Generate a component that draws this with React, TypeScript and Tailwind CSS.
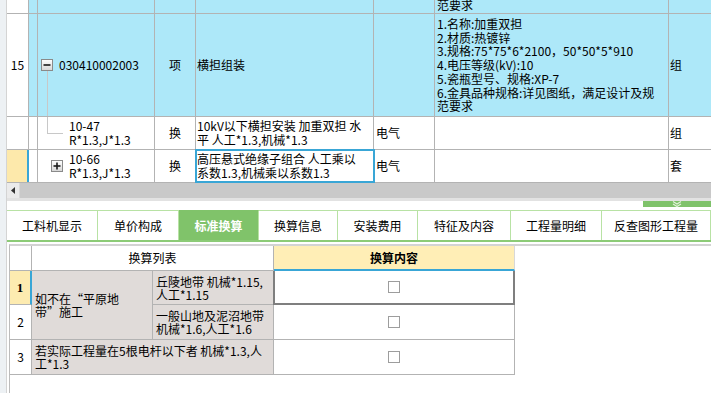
import React from "react"

const ff = "font-['Noto_Sans_CJK_SC','Noto_Sans',sans-serif]"
const line = "border-[#b3b3b3]"
const blue = "bg-[#ade8f9]"

// widths of the upper grid columns (border included)
const W = {
  num: "w-[22px]",
  c1: "w-[9px]",
  code: "w-[117px]",
  type: "w-[41px]",
  name: "w-[178px]",
  major: "w-[61px]",
  feat: "w-[234px]",
}

function TreeBox({ plus }: { plus?: boolean }) {
  return (
    <svg width="12" height="12" viewBox="0 0 12 12" className="shrink-0">
      <defs>
        <linearGradient id={plus ? "gp" : "gm"} x1="0" y1="0" x2="0" y2="1">
          <stop offset="0" stopColor="#ffffff" />
          <stop offset="1" stopColor="#d6d6d6" />
        </linearGradient>
      </defs>
      <rect x="0.5" y="0.5" width="11" height="11" fill={`url(#${plus ? "gp" : "gm"})`} stroke="#8a8a8a" />
      <path d="M2.5 6h7" stroke="#1a1a1a" strokeWidth="1.6" />
      {plus && <path d="M6 2.5v7" stroke="#1a1a1a" strokeWidth="1.6" />}
    </svg>
  )
}

function Check() {
  return <span className="block w-[12px] h-[12px] border border-[#9d9d9d] bg-white" />
}

const tabs = [
  { label: "工料机显示", w: "w-[91px]" },
  { label: "单价构成", w: "w-[81px]" },
  { label: "标准换算", w: "w-[80px]", active: true },
  { label: "换算信息", w: "w-[79px]" },
  { label: "安装费用", w: "w-[80px]" },
  { label: "特征及内容", w: "w-[93px]" },
  { label: "工程量明细", w: "w-[91px]" },
  { label: "反查图形工程量", w: "flex-1" },
]

export default function App() {
  return (
    <div className={`w-[711px] h-[393px] overflow-hidden flex bg-white text-[12px] text-black ${ff}`}>
      <div className="w-[7px] shrink-0 bg-[#edf1f4] border-r border-[#d4d4d4]" />

      <div className="flex-1 flex flex-col min-w-0">
        {/* upper grid */}
        <div className={`flex h-[14px] border-b ${line}`}>
          <div className={`${W.num} shrink-0 border-r ${line} bg-white`} />
          <div className={`${W.c1} shrink-0 border-r ${line} ${blue}`} />
          <div className={`${W.code} shrink-0 border-r ${line} ${blue}`} />
          <div className={`${W.type} shrink-0 border-r ${line} ${blue}`} />
          <div className={`${W.name} shrink-0 border-r ${line} ${blue}`} />
          <div className={`${W.major} shrink-0 border-r ${line} ${blue}`} />
          <div className={`${W.feat} shrink-0 border-r ${line} ${blue} overflow-hidden pl-[2px]`}>
            <div className="leading-[13px] -mt-[2px]">范要求</div>
          </div>
          <div className={`flex-1 ${blue}`} />
        </div>

        <div className={`flex h-[103px] border-b ${line}`}>
          <div className={`${W.num} shrink-0 border-r ${line} bg-white flex items-center justify-center`}>15</div>
          <div className={`${W.c1} shrink-0 border-r ${line} ${blue}`} />
          <div className={`${W.code} shrink-0 border-r ${line} ${blue} relative flex items-center pl-[3px] gap-[6px]`}>
            <TreeBox />
            <span>030410002003</span>
            <span className="absolute left-[9px] top-[57px] bottom-0 w-px bg-[#c8c8c8]" />
          </div>
          <div className={`${W.type} shrink-0 border-r ${line} ${blue} flex items-center justify-center`}>项</div>
          <div className={`${W.name} shrink-0 border-r ${line} ${blue} flex items-center pl-[1px]`}>横担组装</div>
          <div className={`${W.major} shrink-0 border-r ${line} ${blue}`} />
          <div className={`${W.feat} shrink-0 border-r ${line} ${blue} flex items-center pl-[2px] overflow-hidden`}>
            <div className="leading-[13.7px] whitespace-nowrap">
              <div>1.名称:加重双担</div>
              <div>2.材质:热镀锌</div>
              <div>3.规格:75*75*6*2100，50*50*5*910</div>
              <div>4.电压等级(kV):10</div>
              <div>5.瓷瓶型号、规格:XP-7</div>
              <div>6.金具品种规格:详见图纸，满足设计及规</div>
              <div>范要求</div>
            </div>
          </div>
          <div className={`flex-1 ${blue} flex items-center pl-[1px]`}>组</div>
        </div>

        <div className={`flex h-[33px] border-b ${line}`}>
          <div className={`${W.num} shrink-0 border-r ${line} bg-white`} />
          <div className={`${W.c1} shrink-0 border-r ${line}`} />
          <div className={`${W.code} shrink-0 border-r ${line} relative flex items-center pl-[31px]`}>
            <span className="absolute left-[9px] top-0 h-[16px] w-px bg-[#c8c8c8]" />
            <span className="absolute left-[9px] top-[16px] w-[16px] h-px bg-[#c8c8c8]" />
            <div className="leading-[14px] whitespace-nowrap">
              <div>10-47</div>
              <div>R*1.3,J*1.3</div>
            </div>
          </div>
          <div className={`${W.type} shrink-0 border-r ${line} flex items-center justify-center`}>换</div>
          <div className={`${W.name} shrink-0 border-r ${line} flex items-center pl-[1px] overflow-hidden`}>
            <div className="leading-[14px] whitespace-nowrap">
              <div>10kV以下横担安装 加重双担 水</div>
              <div>平  人工*1.3,机械*1.3</div>
            </div>
          </div>
          <div className={`${W.major} shrink-0 border-r ${line} flex items-center pl-[2px]`}>电气</div>
          <div className={`${W.feat} shrink-0 border-r ${line}`} />
          <div className="flex-1 flex items-center pl-[1px]">组</div>
        </div>

        <div className={`flex h-[33px] border-b ${line}`}>
          <div className={`${W.num} shrink-0 border-r-2 border-[#39a6d6] bg-[#fde9ab]`} />
          <div className={`${W.c1} shrink-0 border-r ${line}`} />
          <div className={`${W.code} shrink-0 border-r ${line} flex items-center pl-[13px] gap-[6px]`}>
            <TreeBox plus />
            <div className="leading-[14px] whitespace-nowrap">
              <div>10-66</div>
              <div>R*1.3,J*1.3</div>
            </div>
          </div>
          <div className={`${W.type} shrink-0 border-r ${line} flex items-center justify-center`}>换</div>
          <div className={`${W.name} shrink-0 border-r ${line} flex items-center pl-[1px] overflow-hidden outline-2 outline-[#39a6d6] -outline-offset-1`}>
            <div className="leading-[14px] whitespace-nowrap">
              <div>高压悬式绝缘子组合 人工乘以</div>
              <div>系数1.3,机械乘以系数1.3</div>
            </div>
          </div>
          <div className={`${W.major} shrink-0 border-r ${line} flex items-center pl-[2px]`}>电气</div>
          <div className={`${W.feat} shrink-0 border-r ${line}`} />
          <div className="flex-1 flex items-center pl-[1px]">套</div>
        </div>

        {/* horizontal scrollbar */}
        <div className="flex h-[15px] bg-[#c9c9c9]">
          <div className="w-[13px] bg-[#ebebeb] flex items-center justify-center border-r border-[#d8d8d8]">
            <svg width="4" height="7" viewBox="0 0 4 7">
              <path d="M4 0L0 3.5L4 7z" fill="#333" />
            </svg>
          </div>
        </div>

        {/* splitter */}
        <div className="h-[12px] flex flex-col">
          <div className="h-[3px] bg-[#e2e2e2]" />
          <div className="h-[6px] flex justify-end">
            <div className="w-[68px] bg-[#7fc26b] flex items-center justify-center">
              <svg width="10" height="6" viewBox="0 0 10 6">
                <path d="M1 0.5L5 3L9 0.5M1 3L5 5.5L9 3" stroke="#e2f3da" strokeWidth="1.2" fill="none" />
              </svg>
            </div>
          </div>
        </div>

        {/* tabs */}
        <div className="flex h-[32px] border-b-2 border-[#8ccb77]">
          {tabs.map((t) => (
            <div
              key={t.label}
              className={`${t.w} h-[30px] shrink-0 flex items-center justify-center border-r border-t ${
                t.active
                  ? "bg-[#80c36a] border-t-[#80c36a] border-r-[#b8e2a4] text-white font-bold"
                  : "bg-white border-[#b8e2a4]"
              }`}
            >
              {t.label}
            </div>
          ))}
        </div>

        {/* conversion table */}
        <div className="flex-1 ml-[2px] mt-[2px] border-l border-t-2 border-l-[#bcbcbc] border-t-[#d3d3d3]">
          <div className="grid grid-cols-[22px_121px_121px_241px] grid-rows-[25px_34px_35px_35px] w-fit">
            <div className={`col-start-1 row-start-1 border-r border-b ${line}`} />
            <div className={`col-start-2 col-span-2 row-start-1 border-r border-b ${line} flex items-center justify-center`}>
              换算列表
            </div>
            <div className="col-start-4 row-start-1 bg-[#ffeeb6] border-r border-r-[#d8d8d8] border-b-2 border-b-[#39a6d6] flex items-center justify-center font-bold">
              换算内容
            </div>

            <div className={`col-start-1 row-start-2 bg-[#fdebb0] border-r-2 border-r-[#39a6d6] border-b ${line} flex items-center justify-center font-bold font-['Liberation_Serif',serif] text-[13px]`}>
              1
            </div>
            <div className={`col-start-2 row-start-2 row-span-2 bg-[#e0dbd9] border-r border-b ${line} flex items-center pl-[3px]`}>
              <div className="leading-[13px] whitespace-nowrap">
                <div>如不在“平原地</div>
                <div>带”施工</div>
              </div>
            </div>
            <div className={`col-start-3 row-start-2 bg-[#e0dbd9] border-r border-b ${line} flex items-center pl-[3px] overflow-hidden`}>
              <div className="leading-[13px] whitespace-nowrap">
                <div>丘陵地带 机械*1.15,</div>
                <div>人工*1.15</div>
              </div>
            </div>
            <div className="col-start-4 row-start-2 border-l-2 border-r-2 border-b-2 border-[#7f7f7f] -ml-px flex items-center justify-center">
              <Check />
            </div>

            <div className={`col-start-1 row-start-3 border-r border-b ${line} flex items-center justify-center`}>2</div>
            <div className={`col-start-3 row-start-3 bg-[#e0dbd9] border-r border-b ${line} flex items-center pl-[3px] overflow-hidden`}>
              <div className="leading-[13px] whitespace-nowrap">
                <div>一般山地及泥沼地带</div>
                <div>机械*1.6,人工*1.6</div>
              </div>
            </div>
            <div className={`col-start-4 row-start-3 border-r border-b ${line} flex items-center justify-center`}>
              <Check />
            </div>

            <div className={`col-start-1 row-start-4 border-r border-b ${line} flex items-center justify-center`}>3</div>
            <div className={`col-start-2 col-span-2 row-start-4 bg-[#e0dbd9] border-r border-b ${line} flex items-center pl-[3px] overflow-hidden`}>
              <div className="leading-[13px] whitespace-nowrap">
                <div>若实际工程量在5根电杆以下者 机械*1.3,人</div>
                <div>工*1.3</div>
              </div>
            </div>
            <div className={`col-start-4 row-start-4 border-r border-b ${line} flex items-center justify-center`}>
              <Check />
            </div>
          </div>
        </div>
      </div>
    </div>
  )
}
